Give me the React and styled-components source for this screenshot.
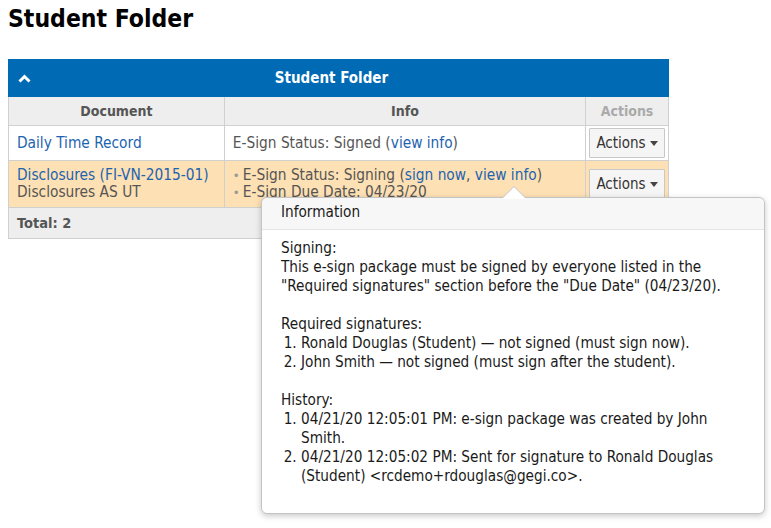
import React from 'react';
import styled, { createGlobalStyle } from 'styled-components';

const font = `"DejaVu Sans Condensed", "DejaVu Sans", Tahoma, sans-serif`;
const blue = '#006bb4';
const link = '#1c63b0';
const border = '#d0d0d0';

const GlobalStyle = createGlobalStyle`
      body {
            margin: 0;
            background: #fff;
            font-family: ${font};
            font-stretch: condensed;
      }
`

const Page = styled.div`
      position: relative;
      padding: 5px 8px;
      width: 771px;
      height: 528px;
      box-sizing: border-box;
`

const Titulo = styled.h1`
      margin: 0 0 26px;
      font-size: 24.5px;
      line-height: 28px;
      font-weight: bold;
      color: #000;
`

const Tabela = styled.table`
      width: 661px;
      border-collapse: collapse;
      font-size: 15.3px;
      color: #555;
`

const BarraTopo = styled.th`
      position: relative;
      background: ${blue};
      color: #fff;
      height: 36px;
      padding: 0 14px 0 0;
      font-size: 15px;
      font-weight: bold;
      border: 1px solid ${blue};
`

const Chevron = styled.svg`
      position: absolute;
      left: 9px;
      top: 14px;
`

const Cabecalho = styled.th`
      background: #eee;
      border: 1px solid ${border};
      height: 29px;
      padding: 0 8px;
      font-size: 14px;
      font-weight: bold;
      color: ${props => props.fraco ? '#aaa' : '#555'};
      width: ${props => props.largura}px;
      box-sizing: border-box;
`

const Linha = styled.tr`
      background: ${props => props.destaque ? '#fde0b3' : '#fff'};
`

const Celula = styled.td`
      border: 1px solid ${border};
      padding: 6px 8px;
      line-height: 17px;
      vertical-align: middle;
      white-space: nowrap;
`

const CelulaAcoes = styled.td`
      border: 1px solid ${border};
      padding: 2px 2px;
      vertical-align: middle;
`

const Link = styled.a`
      color: ${link};
      text-decoration: none;
`

const Linha2 = styled.div`
      line-height: 17px;
`

const Lista = styled.ul`
      margin: 0;
      padding: 0;
      list-style: none;
`

const Item = styled.li`
      &::before {
            content: '•';
            color: #999;
            font-size: 13px;
            display: inline-block;
            width: 10px;
      }
`

const BotaoAcoes = styled.button`
      display: flex;
      align-items: center;
      gap: 4px;
      margin: 0 auto;
      height: 30px;
      padding: 0 6px;
      background: #f5f5f5;
      border: 1px solid #c8c8c8;
      border-radius: 1px;
      font-family: ${font};
      font-stretch: condensed;
      font-size: 15px;
      color: #333;

      &::after {
            content: '';
            border-left: 4px solid transparent;
            border-right: 4px solid transparent;
            border-top: 5px solid #444;
      }
`

const Rodape = styled.td`
      background: #eee;
      border: 1px solid ${border};
      height: 30px;
      padding: 0 8px;
      font-weight: bold;
      font-size: 14.5px;
      color: #555;
`

const Popover = styled.div`
      position: absolute;
      left: 261px;
      top: 197px;
      width: 504px;
      height: 317px;
      box-sizing: border-box;
      background: #fff;
      border: 1px solid #c4c4c4;
      border-radius: 6px;
      box-shadow: 0 2px 6px rgba(0, 0, 0, 0.22);
      font-size: 15.2px;
      line-height: 19px;
      color: #1a1a1a;

      &::before, &::after {
            content: '';
            position: absolute;
            left: 240px;
            border-left: 12px solid transparent;
            border-right: 12px solid transparent;
      }
      &::before {
            top: -12px;
            border-bottom: 12px solid #c4c4c4;
      }
      &::after {
            top: -11px;
            border-bottom: 12px solid #fff;
      }
`

const PopoverTopo = styled.div`
      height: 31px;
      line-height: 29px;
      padding: 0 19px;
      background: #f7f7f7;
      border-bottom: 1px solid #e4e4e4;
      border-radius: 6px 6px 0 0;
`

const PopoverCorpo = styled.div`
      padding: 9px 28px 9px 19px;
`

const Paragrafo = styled.p`
      margin: 0 0 19px;
`

const ListaNum = styled.ol`
      margin: 0 0 19px;
      padding-left: 20px;
`

const dados = [
      {
            key: 1,
            documento: ['Daily Time Record'],
            info: <>E-Sign Status: Signed (<Link href="#">view info</Link>)</>,
      },
      {
            key: 2,
            destaque: true,
            documento: ['Disclosures (FI-VN-2015-01)', 'Disclosures AS UT'],
            info: (
                  <Lista>
                        <Item>E-Sign Status: Signing (<Link href="#">sign now</Link>, <Link href="#">view info</Link>)</Item>
                        <Item>E-Sign Due Date: 04/23/20</Item>
                  </Lista>
            ),
      },
]

const App = () => {

      return (
            <Page>
                  <GlobalStyle />
                  <Titulo>Student Folder</Titulo>

                  <Tabela>
                        <thead>
                              <tr>
                                    <BarraTopo colSpan={3}>
                                          <Chevron width="13" height="9" viewBox="0 0 13 9">
                                                <path d="M1.5 7.5 L6.5 2.5 L11.5 7.5" fill="none" stroke="#fff" strokeWidth="3" />
                                          </Chevron>
                                          Student Folder
                                    </BarraTopo>
                              </tr>
                              <tr>
                                    <Cabecalho largura={216}>Document</Cabecalho>
                                    <Cabecalho largura={362}>Info</Cabecalho>
                                    <Cabecalho largura={83} fraco>Actions</Cabecalho>
                              </tr>
                        </thead>
                        <tbody>
                              {dados.map(item => (
                                    <Linha key={item.key} destaque={item.destaque}>
                                          <Celula>
                                                <Linha2><Link href="#">{item.documento[0]}</Link></Linha2>
                                                {item.documento[1] && <Linha2>{item.documento[1]}</Linha2>}
                                          </Celula>
                                          <Celula>{item.info}</Celula>
                                          <CelulaAcoes>
                                                <BotaoAcoes>Actions</BotaoAcoes>
                                          </CelulaAcoes>
                                    </Linha>
                              ))}
                              <tr>
                                    <Rodape colSpan={3}>Total: 2</Rodape>
                              </tr>
                        </tbody>
                  </Tabela>

                  <Popover>
                        <PopoverTopo>Information</PopoverTopo>
                        <PopoverCorpo>
                              <Paragrafo>
                                    Signing:<br />
                                    This e-sign package must be signed by everyone listed in the
                                    "Required signatures" section before the "Due Date" (04/23/20).
                              </Paragrafo>
                              Required signatures:
                              <ListaNum>
                                    <li>Ronald Douglas (Student) — not signed (must sign now).</li>
                                    <li>John Smith — not signed (must sign after the student).</li>
                              </ListaNum>
                              History:
                              <ListaNum>
                                    <li>04/21/20 12:05:01 PM: e-sign package was created by John Smith.</li>
                                    <li>04/21/20 12:05:02 PM: Sent for signature to Ronald Douglas (Student) &lt;rcdemo+rdouglas@gegi.co&gt;.</li>
                              </ListaNum>
                        </PopoverCorpo>
                  </Popover>
            </Page>
      );
}

export default App;
